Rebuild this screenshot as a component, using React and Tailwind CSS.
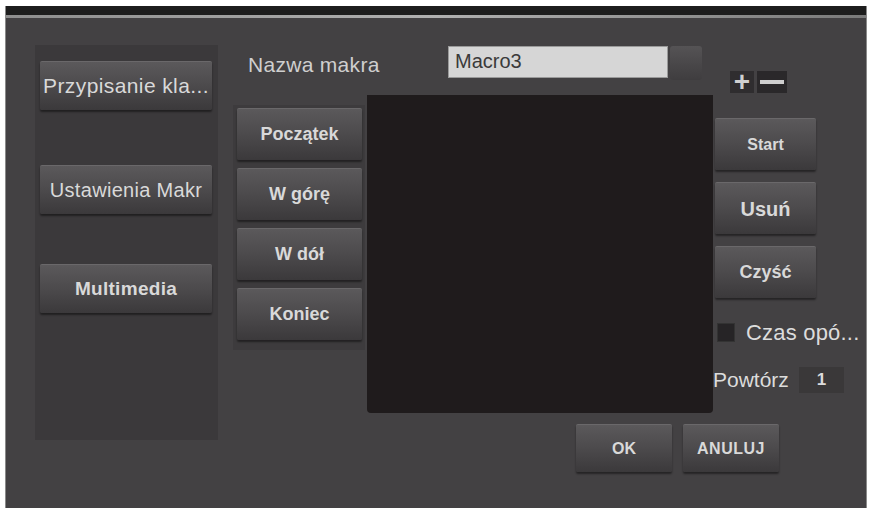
import React from "react";

// shared look of the raised grey buttons
const btn =
  "flex items-center justify-center whitespace-nowrap rounded-[2px] border-t border-[#6a686a] bg-gradient-to-b from-[#5b595b] via-[#4c4a4c] to-[#3b393b] text-[#d9d9d9] shadow-[0_2px_2px_rgba(0,0,0,0.45)] select-none";

const SideButton = ({ label, className = "" }) => (
  <div className={btn + " w-[172px] h-[49px] " + className}>{label}</div>
);

const MoveButton = ({ label }) => (
  <div className={btn + " w-[125px] h-[52px] text-[18px] font-bold"}>{label}</div>
);

const ActionButton = ({ label, size }) => (
  <div className={btn + " w-[101px] h-[52px] font-bold " + size}>{label}</div>
);

export default function App() {
  return (
    <div className="w-[870px] h-[512px] bg-white pl-[5px] pt-[6px] font-['Liberation_Sans',Arial,sans-serif]">
      <div className="w-[862px] h-[502px] flex flex-col border-l border-r border-[#8a8a8a] bg-[#434143]">
        {/* title strip */}
        <div className="h-[9px] bg-[#1d1d1d]" />
        <div className="h-[3px] bg-gradient-to-r from-[#8e8e8e] via-[#b0b0b0] to-[#7a7a7a]" />

        <div className="flex flex-1 pl-[29px] pt-[27px]">
          {/* left menu panel */}
          <div className="w-[183px] h-[395px] bg-[#3b393b] flex flex-col pl-[5px] pt-[16px]">
            <SideButton label="Przypisanie kla..." className="text-[21px] tracking-[0.4px] text-[#cdcdcd]" />
            <SideButton label="Ustawienia Makr" className="mt-[55px] text-[20px] tracking-[0.3px] text-[#cdcdcd]" />
            <SideButton label="Multimedia" className="mt-[50px] text-[19px] font-semibold tracking-[0.3px] text-[#c4c4c4]" />
          </div>

          <div className="flex flex-col ml-[15px]">
            {/* macro name row */}
            <div className="flex h-[50px]">
              <div className="w-[215px] pl-[15px] pt-[4px] text-[21px] tracking-[0.3px] text-[#cfcfcf]">Nazwa makra</div>
              <div className="w-[220px] h-[32px] mt-[1px] bg-[#d6d6d6] border border-[#9a9a9a] px-[6px] pt-[2px] text-[20px] leading-[24px] text-[#3a3a3a]">
                Macro3
              </div>
              <div className="w-[32px] h-[34px] mt-[1px] ml-[2px] rounded-[3px] bg-gradient-to-b from-[#555355] to-[#3f3d3f]" />
              <div className="flex items-end gap-[3px] ml-[28px] pb-[2px]">
                <div className="w-[24px] h-[22px] flex items-center justify-center bg-[#2f2d2f] text-[28px] leading-none font-bold text-[#d0d0d0]">+</div>
                <div className="w-[30px] h-[22px] flex items-center justify-center bg-[#2a282a]">
                  <div className="w-[24px] h-[4px] bg-[#cfcfcf]" />
                </div>
              </div>
            </div>

            <div className="flex">
              {/* cursor movement buttons */}
              <div className="w-[132px] h-[245px] mt-[10px] bg-[#3d3b3d] flex flex-col gap-[8px] pl-[4px] pt-[3px]">
                <MoveButton label="Początek" />
                <MoveButton label="W górę" />
                <MoveButton label="W dół" />
                <MoveButton label="Koniec" />
              </div>

              {/* recorded events list */}
              <div className="w-[346px] h-[318px] ml-[2px] bg-[#1f1b1c] rounded-b-[4px]" />

              <div className="flex flex-col">
                <div className="flex flex-col gap-[12px] pl-[2px] pt-[23px]">
                  <ActionButton label="Start" size="text-[16px]" />
                  <ActionButton label="Usuń" size="text-[20px]" />
                  <ActionButton label="Czyść" size="text-[18px]" />
                </div>
                <div className="flex items-center mt-[18px] pl-[4px]">
                  <div className="w-[18px] h-[19px] bg-[#262426] border border-[#333]" />
                  <span className="ml-[11px] text-[22px] tracking-[0.2px] text-[#dcdcdc] whitespace-nowrap">Czas opó...</span>
                </div>
                <div className="flex items-center mt-[15px]">
                  <span className="text-[21px] text-[#dcdcdc]">Powtórz</span>
                  <div className="w-[45px] h-[26px] ml-[10px] bg-[#3a3839] flex items-center justify-center text-[17px] font-bold text-[#dcdcdc]">
                    1
                  </div>
                </div>
              </div>
            </div>

            {/* dialog buttons */}
            <div className="flex gap-[11px] ml-[343px] mt-[11px]">
              <div className={btn + " w-[96px] h-[48px] text-[16px] font-bold"}>OK</div>
              <div className={btn + " w-[96px] h-[48px] text-[16px] font-bold tracking-[0.5px]"}>ANULUJ</div>
            </div>
          </div>
        </div>
      </div>
    </div>
  );
}
